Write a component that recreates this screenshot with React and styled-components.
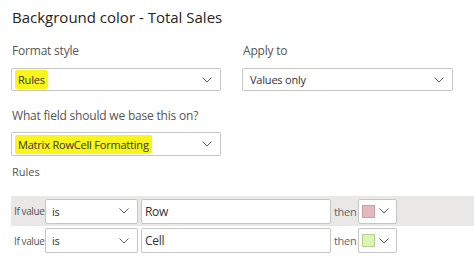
import React from "react";
import styled, { createGlobalStyle } from "styled-components";

const Global = createGlobalStyle`
  html, body { margin: 0; padding: 0; background: #ffffff; }
  body { font-family: "Open Sans", "Noto Sans", sans-serif; color: #333; }
`;

const Page = styled.div`
  width: 474px;
  height: 271px;
  overflow: hidden;
  padding: 7px 0 0 11px;
  box-sizing: border-box;
`;

const Title = styled.h1`
  margin: 0 0 0 1px;
  font-size: 15px;
  font-weight: 400;
  line-height: 20px;
  color: #252423;
`;

const TwoCols = styled.div`
  display: grid;
  grid-template-columns: 210px 211px;
  column-gap: 21px;
  margin-top: 16px;
`;

const Field = styled.div`
  display: flex;
  flex-direction: column;
`;

const Label = styled.div`
  font-size: 12px;
  line-height: 16px;
  letter-spacing: -0.2px;
  color: #555;
  margin: 0 0 ${(p) => p.$gap || 9}px 1px;
`;

const Select = styled.div`
  box-sizing: border-box;
  height: ${(p) => p.$h || 23}px;
  width: ${(p) => (p.$w ? p.$w + "px" : "auto")};
  border: 1px solid #c8c6c4;
  border-radius: 2px;
  background: #fff;
  display: flex;
  align-items: center;
  justify-content: space-between;
  padding: 0 8px 0 ${(p) => p.$pl || 3}px;
  font-size: ${(p) => p.$fs || 11}px;
  letter-spacing: -0.2px;
  color: #333;
`;

const Highlight = styled.span`
  background: #f9f41a;
  padding: 2px 3px;
  border-radius: 2px;
`;

const Chevron = () => (
  <svg width="10" height="6" viewBox="0 0 10 6" fill="none">
    <path d="M0.5 0.5 L5 5 L9.5 0.5" stroke="#605e5c" strokeWidth="1" />
  </svg>
);

const WideField = styled(Field)`
  width: 210px;
  margin-top: 17px;
`;

const RulesLabel = styled.div`
  font-size: 11px;
  line-height: 14px;
  color: #555;
  margin: 9px 0 0 1px;
`;

const Rules = styled.div`
  margin-top: 17px;
  display: flex;
  flex-direction: column;
`;

const RuleRow = styled.div`
  display: flex;
  align-items: center;
  height: ${(p) => (p.$active ? 30 : 29)}px;
  background: ${(p) => (p.$active ? "#e9e8e6" : "transparent")};
  padding-left: 3px;
  gap: 3px;
`;

const RowLabel = styled.span`
  font-size: 10px;
  color: #555;
  width: 28px;
  white-space: nowrap;
  letter-spacing: -0.4px;
`;

const Input = styled.div`
  box-sizing: border-box;
  width: 190px;
  height: 25px;
  border: 1px solid #c8c6c4;
  border-radius: 2px;
  background: #fff;
  display: flex;
  align-items: center;
  padding-left: 3px;
  font-size: 12px;
  letter-spacing: -0.3px;
  color: #333;
`;

const Then = styled.span`
  font-size: 11px;
  color: #666;
  width: 21px;
  letter-spacing: -0.3px;
`;

const ColorPick = styled.div`
  box-sizing: border-box;
  width: 39px;
  height: 25px;
  border: 1px solid #c8c6c4;
  border-radius: 2px;
  background: #fff;
  display: flex;
  align-items: center;
  justify-content: space-between;
  padding: 0 7px 0 3px;
`;

const Swatch = styled.span`
  width: 11px;
  height: 11px;
  background: ${(p) => p.$c};
  border: 1px solid ${(p) => p.$b};
`;

const rules = [
  { value: "Row", color: "#e6b8bd", border: "#c8a0a4", active: true },
  { value: "Cell", color: "#dcf5b4", border: "#b8cf94", active: false },
];

export default function App() {
  return (
    <>
      <Global />
      <Page>
        <Title>Background color - Total Sales</Title>
        <TwoCols>
          <Field>
            <Label>Format style</Label>
            <Select>
              <Highlight>Rules</Highlight>
              <Chevron />
            </Select>
          </Field>
          <Field>
            <Label>Apply to</Label>
            <Select $pl={7}>
              <span>Values only</span>
              <Chevron />
            </Select>
          </Field>
        </TwoCols>
        <WideField>
          <Label $gap={8}>What field should we base this on?</Label>
          <Select $h={24}>
            <Highlight>Matrix RowCell Formatting</Highlight>
            <Chevron />
          </Select>
        </WideField>
        <RulesLabel>Rules</RulesLabel>
        <Rules>
          {rules.map((r) => (
            <RuleRow key={r.value} $active={r.active}>
              <RowLabel>If value</RowLabel>
              <Select $w={93} $h={25} $pl={6} $fs={11}>
                <span>is</span>
                <Chevron />
              </Select>
              <Input>{r.value}</Input>
              <Then>then</Then>
              <ColorPick>
                <Swatch $c={r.color} $b={r.border} />
                <Chevron />
              </ColorPick>
            </RuleRow>
          ))}
        </Rules>
      </Page>
    </>
  );
}
